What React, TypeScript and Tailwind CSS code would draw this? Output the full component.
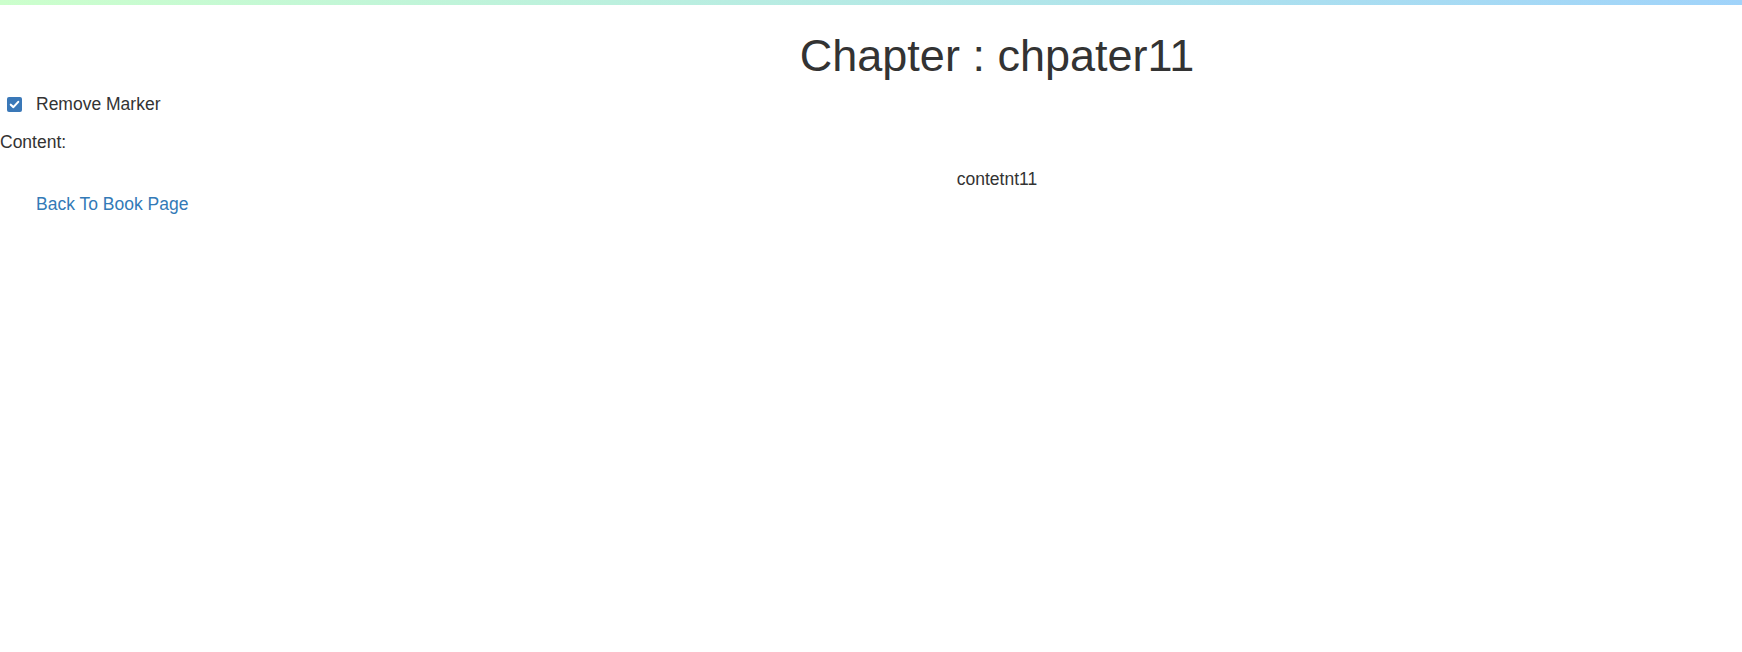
import React, { useState } from "react";

const font = { fontFamily: '"Liberation Sans", Arial, sans-serif' };

export default function App() {
  const [removeMarker, setRemoveMarker] = useState(true);

  return (
    <div className="min-h-[652px] bg-white text-[#333]" style={font}>
      <div className="h-[5px] w-full bg-gradient-to-r from-[#ccffcc] to-[#a0d3fa]" />

      <div className="ml-[252px] text-center">
        <h1 className="mt-[26px] text-[45px] leading-[49.5px] font-normal">
          Chapter : chpater11
        </h1>
      </div>

      <label className="mt-[11px] flex h-[25px] cursor-pointer items-center text-[17.5px] leading-[25px]">
        <input
          type="checkbox"
          className="sr-only"
          checked={removeMarker}
          onChange={() => setRemoveMarker(!removeMarker)}
        />
        <span
          className={`ml-[7px] flex h-[15px] w-[15px] items-center justify-center rounded-[2px] ${
            removeMarker ? "bg-[#3a78b8]" : "border border-[#767676] bg-white"
          }`}
        >
          {removeMarker && (
            <svg width="11" height="11" viewBox="0 0 10 10">
              <path
                d="M1.6 5.2 L4 7.4 L8.4 2.6"
                fill="none"
                stroke="#fff"
                strokeWidth="1.9"
                strokeLinecap="round"
                strokeLinejoin="round"
              />
            </svg>
          )}
        </span>
        <span className="ml-[14px]">Remove Marker</span>
      </label>

      <div className="mt-[13px] text-[17.5px] leading-[25px]">Content:</div>

      <div className="mt-[12px] ml-[252px] text-center text-[17.5px] leading-[25px]">
        contetnt11
      </div>

      <div className="text-[17.5px] leading-[25px]">
        <a href="#" className="ml-[36px] text-[#337ab7] hover:underline">
          Back To Book Page
        </a>
      </div>
    </div>
  );
}
